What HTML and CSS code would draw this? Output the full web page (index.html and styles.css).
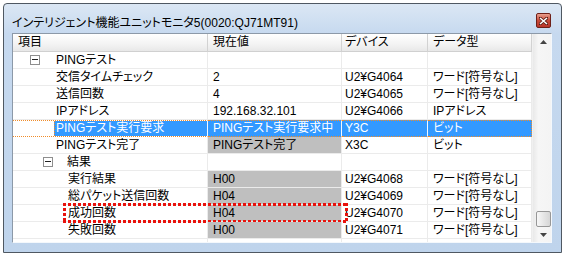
FILE: index.html
```html
<!DOCTYPE html>
<html lang="ja">
<head>
    <meta charset="UTF-8">
    <title>インテリジェント機能ユニットモニタ5</title>
    <link rel="stylesheet" href="styles.css">
</head>
<body>
    <div class="window">
        <div class="titlebar">
            <span class="title">インテリジェント機能ユニットモニタ5(0020:QJ71MT91)</span>
            <span class="close">
                <svg width="9" height="8" viewBox="0 0 9 8">
                    <path d="M1 1 L8 7 M8 1 L1 7" stroke="#5a1c14" stroke-width="3" stroke-linecap="square"/>
                    <path d="M1 1 L8 7 M8 1 L1 7" stroke="#fff" stroke-width="1.6"/>
                </svg>
            </span>
        </div>

        <div class="list">
            <div class="table">
                <div class="row head">
                    <div class="cell">項目</div>
                    <div class="cell">現在値</div>
                    <div class="cell c3">デバイス</div>
                    <div class="cell">データ型</div>
                </div>

                <div class="row">
                    <div class="cell tree lv0"><span class="box"></span><span class="label">PINGテスト</span></div>
                    <div class="cell"></div>
                    <div class="cell c3"></div>
                    <div class="cell"></div>
                </div>
                <div class="row">
                    <div class="cell tree lv1"><span class="label">交信タイムチェック</span></div>
                    <div class="cell">2</div>
                    <div class="cell c3">U2¥G4064</div>
                    <div class="cell">ワード[符号なし]</div>
                </div>
                <div class="row">
                    <div class="cell tree lv1"><span class="label">送信回数</span></div>
                    <div class="cell">4</div>
                    <div class="cell c3">U2¥G4065</div>
                    <div class="cell">ワード[符号なし]</div>
                </div>
                <div class="row">
                    <div class="cell tree lv1"><span class="label">IPアドレス</span></div>
                    <div class="cell">192.168.32.101</div>
                    <div class="cell c3">U2¥G4066</div>
                    <div class="cell">IPアドレス</div>
                </div>
                <div class="row sel">
                    <div class="cell tree lv1"><span class="label">PINGテスト実行要求</span></div>
                    <div class="cell">PINGテスト実行要求中</div>
                    <div class="cell c3">Y3C</div>
                    <div class="cell">ビット</div>
                </div>
                <div class="row">
                    <div class="cell tree lv1"><span class="label">PINGテスト完了</span></div>
                    <div class="cell ro">PINGテスト完了</div>
                    <div class="cell c3">X3C</div>
                    <div class="cell">ビット</div>
                </div>
                <div class="row">
                    <div class="cell tree lv1 node"><span class="box"></span><span class="label">結果</span></div>
                    <div class="cell"></div>
                    <div class="cell c3"></div>
                    <div class="cell"></div>
                </div>
                <div class="row">
                    <div class="cell tree lv2"><span class="label">実行結果</span></div>
                    <div class="cell ro">H00</div>
                    <div class="cell c3">U2¥G4068</div>
                    <div class="cell">ワード[符号なし]</div>
                </div>
                <div class="row">
                    <div class="cell tree lv2"><span class="label">総パケット送信回数</span></div>
                    <div class="cell ro">H04</div>
                    <div class="cell c3">U2¥G4069</div>
                    <div class="cell">ワード[符号なし]</div>
                </div>
                <div class="row marked">
                    <div class="cell tree lv2"><span class="label">成功回数</span></div>
                    <div class="cell ro">H04</div>
                    <div class="cell c3">U2¥G4070</div>
                    <div class="cell">ワード[符号なし]</div>
                    <div class="mark"></div>
                </div>
                <div class="row">
                    <div class="cell tree lv2"><span class="label">失敗回数</span></div>
                    <div class="cell ro">H00</div>
                    <div class="cell c3">U2¥G4071</div>
                    <div class="cell">ワード[符号なし]</div>
                </div>
                <div class="row">
                    <div class="cell"></div>
                    <div class="cell"></div>
                    <div class="cell c3"></div>
                    <div class="cell"></div>
                </div>
            </div>

            <div class="vscroll">
                <div class="arrow">
                    <svg width="7" height="4" viewBox="0 0 7 4"><path d="M0 4 L3.5 0 L7 4 Z" fill="#444"/></svg>
                </div>
                <div class="track"><div class="thumb"></div></div>
                <div class="arrow">
                    <svg width="7" height="4" viewBox="0 0 7 4"><path d="M0 0 L7 0 L3.5 4 Z" fill="#444"/></svg>
                </div>
            </div>
        </div>
    </div>
</body>
</html>
```

FILE: styles.css
```css
body {
    margin: 0;
    background: #fff;
    font-family: "Liberation Sans", "Noto Sans CJK JP", sans-serif;
    font-size: 12px;
    color: #000;
}
.window {
    box-sizing: border-box;
    width: 559px;
    height: 250px;
    margin: 3px 0 0 3px;
    border: 1px solid #4f5862;
    border-radius: 4px 4px 0 0;
    padding: 0 9px 9px 8px;
    background: linear-gradient(#dbe7f4, #c6d9ef 30px, #bfd4ec);
    display: flex;
    flex-direction: column;
}
.titlebar {
    height: 29px;
    display: flex;
    align-items: center;
    justify-content: space-between;
}
.title {
    font-size: 12px;
    padding-top: 5px;
    font-feature-settings: "palt";
}
.close {
    width: 15px;
    height: 15px;
    box-sizing: border-box;
    margin: 4px 1px 0 0;
    border: 1px solid #6e2018;
    border-radius: 2px;
    background: linear-gradient(#e8a08f, #c84a39 50%, #b8362a);
    display: flex;
    align-items: center;
    justify-content: center;
}
.list {
    flex: 1;
    display: flex;
    background: #fff;
    border: 1px solid;
    border-color: #8c99a8 #f4f8fc #f4f8fc #8c99a8;
    overflow: hidden;
}
.table {
    width: 519px;
    overflow: hidden;
}
.row {
    position: relative;
    display: grid;
    grid-template-columns: 195px 134px 86px 104px;
    height: 17px;
}
.cell {
    box-sizing: border-box;
    height: 17px;
    line-height: 16px;
    padding-left: 5px;
    border-right: 1px solid #ebebeb;
    border-bottom: 1px solid #ebebeb;
    white-space: nowrap;
    overflow: hidden;
    font-feature-settings: "palt";
}
.cell.c3 {
    padding-left: 3px;
}
.head {
    height: 18px;
}
.head .cell {
    height: 18px;
    line-height: 17px;
    background: linear-gradient(#ffffff, #f3f3f3 60%, #e8e8e8);
    border-right: 1px solid #d2d2d2;
    border-bottom: 1px solid #d0d0d0;
}
.tree {
    display: flex;
    align-items: center;
    padding-left: 0;
}
.tree .label {
    flex: 1;
    align-self: stretch;
    padding-left: 2px;
}
.lv0 {
    padding-left: 17px;
}
.lv0 .box {
    margin-right: 14px;
}
.lv1 {
    padding-left: 41px;
}
.lv1.node {
    padding-left: 30px;
}
.lv1.node .box {
    margin-right: 12px;
}
.lv2 {
    padding-left: 53px;
}
.box {
    position: relative;
    box-sizing: border-box;
    width: 10px;
    height: 10px;
    border: 1px solid #8e8e8e;
    background: #fff;
}
.box::after {
    content: "";
    position: absolute;
    left: 1px;
    top: 3px;
    width: 6px;
    height: 1px;
    background: #222;
}
.ro {
    background: #bfbfbf;
}
.sel .cell {
    background: #3399ff;
    color: #fff;
    border-top: 1px dotted #f08c2a;
    border-bottom: 1px dotted #f08c2a;
    border-right-color: #f4f8ff;
    line-height: 15px;
}
.sel .cell.tree {
    background: #fff;
}
.sel .tree .label {
    background: #3399ff;
    border-left: 1px dotted #f08c2a;
    padding-left: 1px;
}
.sel .cell:last-child {
    border-right: 1px dotted #f08c2a;
}
.vscroll {
    width: 18px;
    display: flex;
    flex-direction: column;
    background: linear-gradient(90deg, #e9e9e9, #f6f6f6 30%, #f4f4f4);
    border-left: 1px solid #f0f0f0;
}
.arrow {
    height: 15px;
    display: flex;
    align-items: center;
    justify-content: center;
    padding-left: 2px;
}
.track {
    flex: 1;
    display: flex;
    flex-direction: column;
    justify-content: flex-end;
    align-items: flex-end;
}
.thumb {
    box-sizing: border-box;
    width: 15px;
    height: 16px;
    border: 1px solid #979797;
    border-radius: 2px;
    background: linear-gradient(90deg, #f7f7f7, #e6e6e6 50%, #d6d6d6);
}
/* 赤い点線の強調枠 */
.mark {
    position: absolute;
    left: 50px;
    top: -2px;
    width: 285px;
    height: 20px;
    background:
        repeating-linear-gradient(90deg, #e8120c 0 3px, transparent 3px 5px) left top / 100% 3px no-repeat,
        repeating-linear-gradient(90deg, #e8120c 0 3px, transparent 3px 5px) left bottom / 100% 3px no-repeat,
        repeating-linear-gradient(180deg, #e8120c 0 3px, transparent 3px 5px) left top / 3px 100% no-repeat,
        repeating-linear-gradient(180deg, #e8120c 0 3px, transparent 3px 5px) right top / 3px 100% no-repeat;
}
```
